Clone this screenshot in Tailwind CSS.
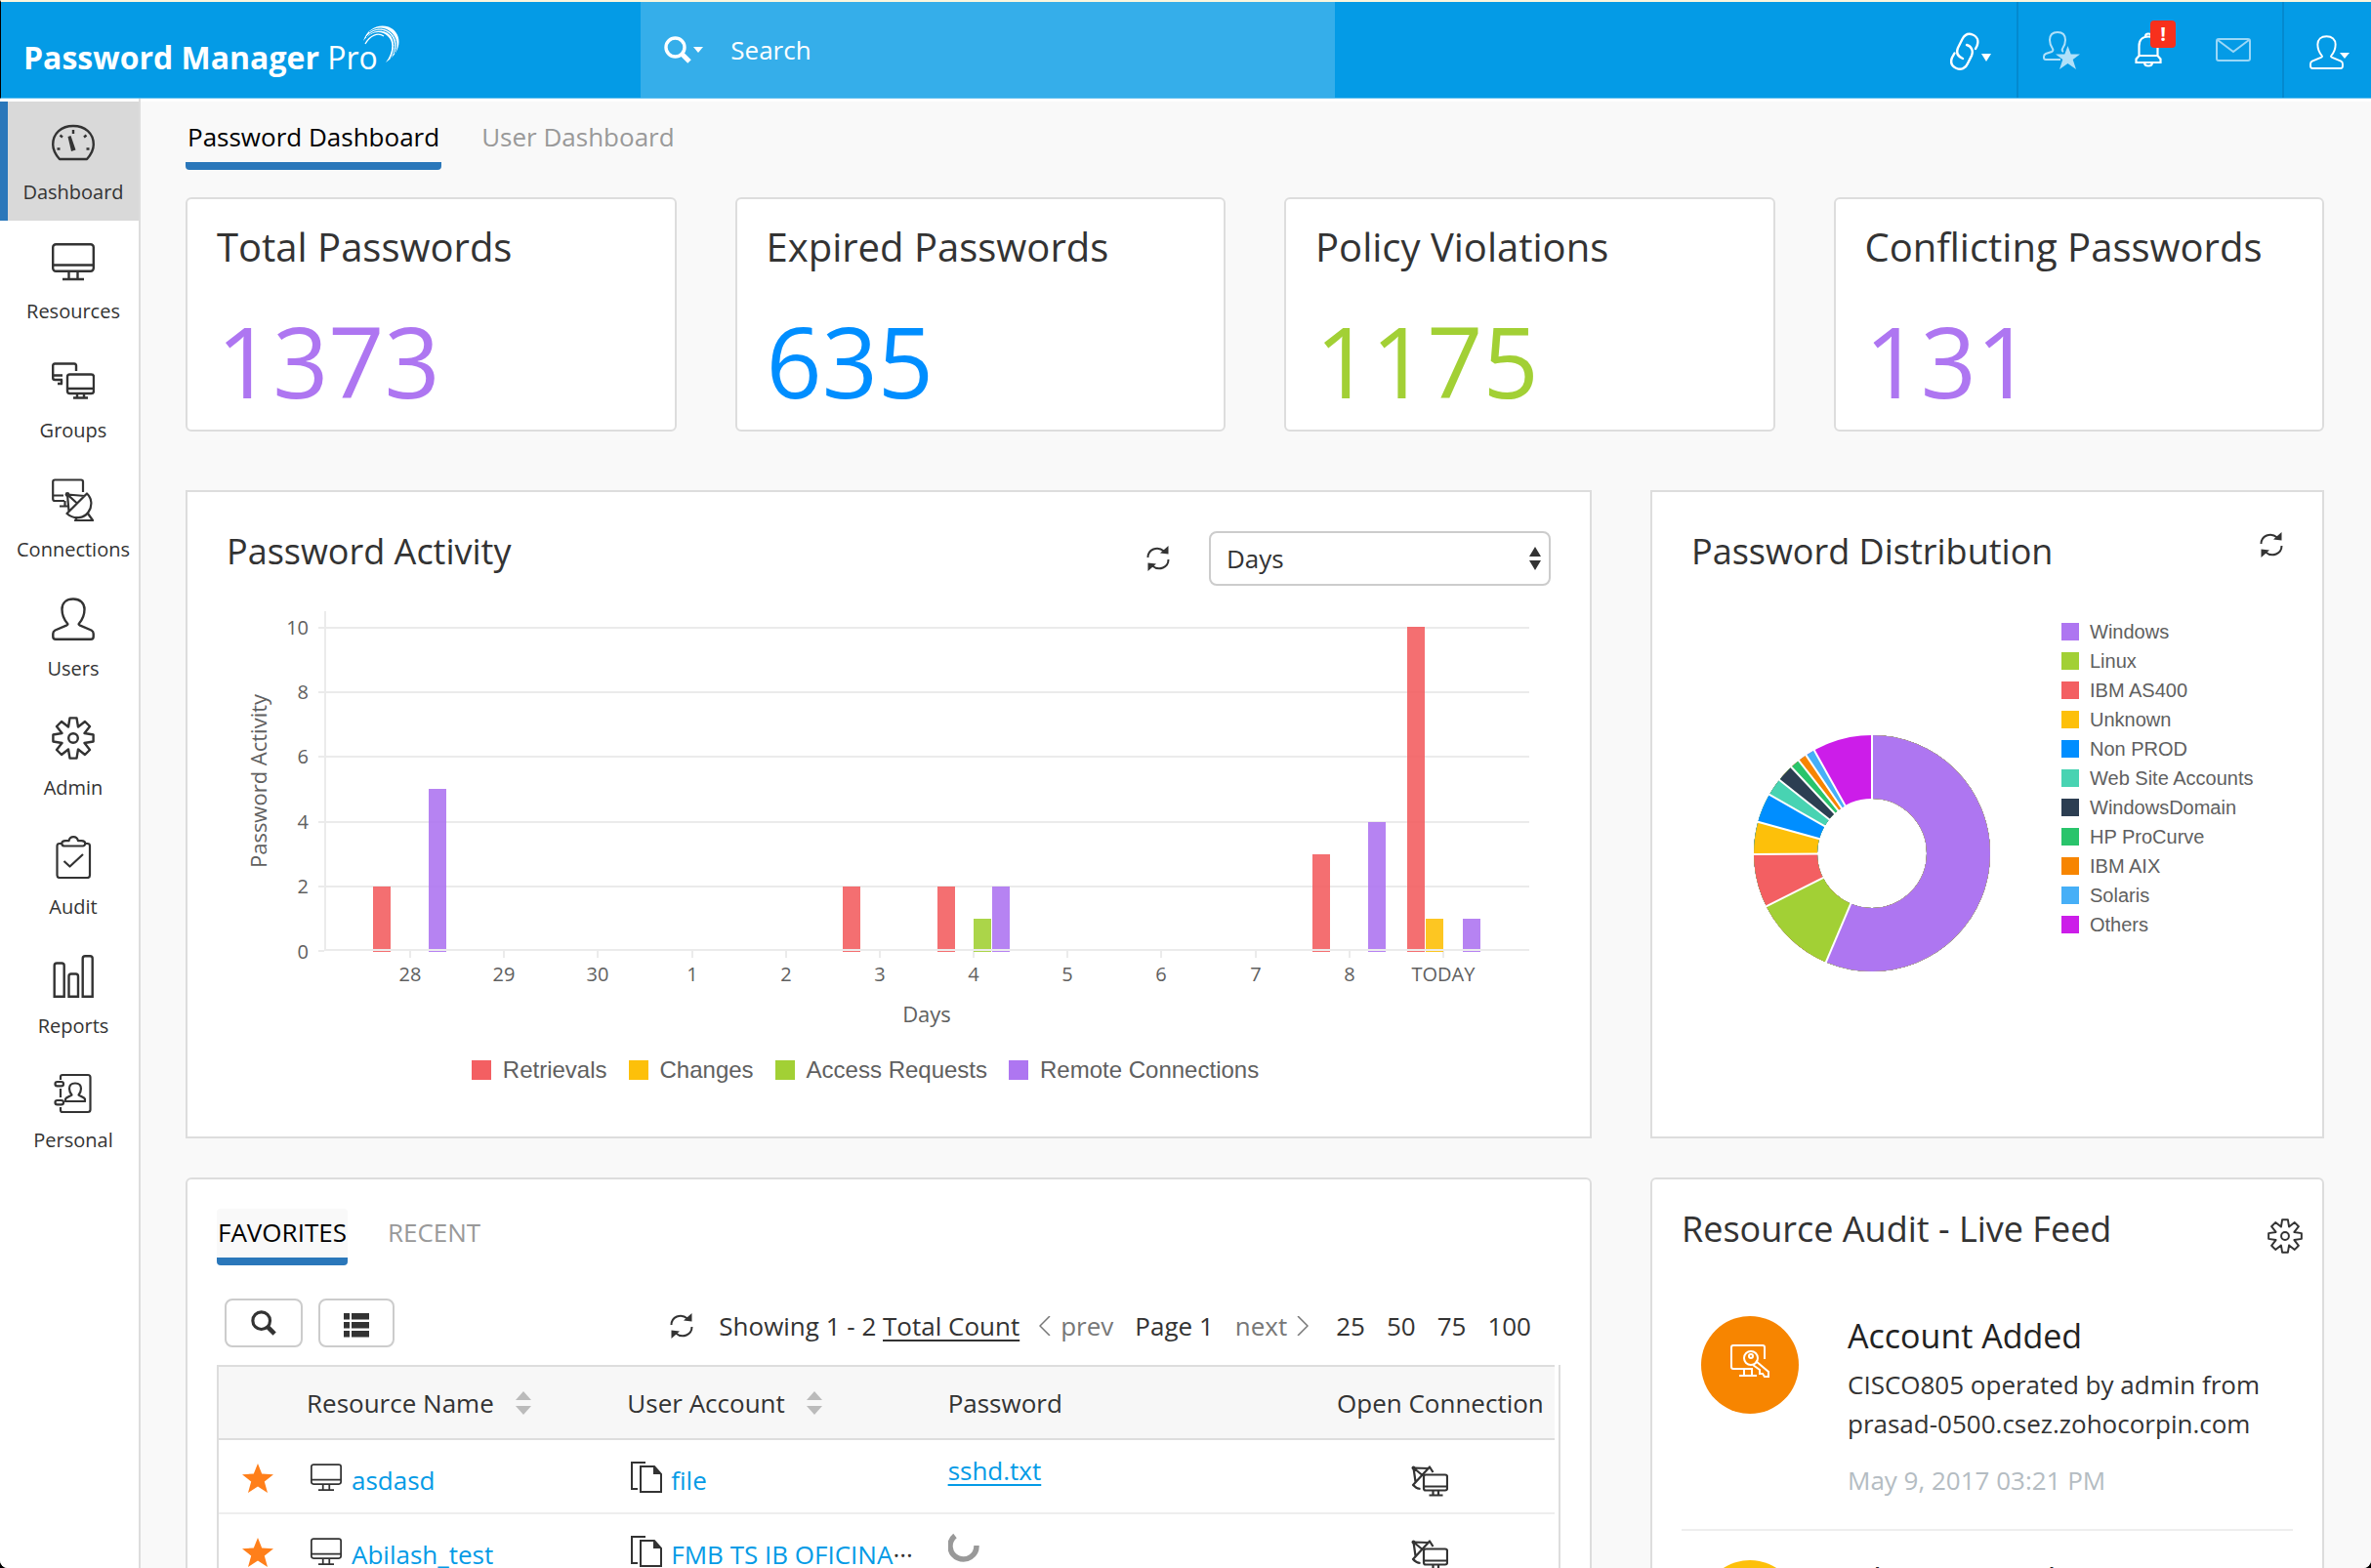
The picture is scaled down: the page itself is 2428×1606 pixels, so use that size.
<!DOCTYPE html>
<html lang="en" class="bg-black">
<head>
  <title>Password Manager Pro</title>
  <meta charset="utf-8">
  <meta name="viewport" content="width=device-width, initial-scale=1">
  <script src="https://cdn.jsdelivr.net/npm/@tailwindcss/browser@4"></script>
</head>
<body class="flex h-screen flex-col overflow-hidden rounded-b-lg bg-white font-['Open_Sans',sans-serif] text-[26px] leading-10 text-[#333]">

  <!-- icon sprite -->
  <svg class="hidden">
    <symbol id="i-gauge" viewBox="0 0 44 44">
      <path d="M8 39h28c4-4.500 6.800-9 6.800-15C42.800 12.500 34 5 22 5S1.200 12.500 1.200 24c0 6 2.800 10.500 6.800 15z" fill="none" stroke="currentColor" stroke-width="2.400" stroke-linejoin="round"/>
      <path d="M22 9v4M8.500 14.500l2.500 2M35.500 14.500l-2.500 2M5.500 28.500h3M35.500 28.500h3" stroke="currentColor" stroke-width="2.400"/>
      <path d="M16.500 16l3-1 5 14.500-4.500 1.500z" fill="currentColor"/>
    </symbol>
    <symbol id="i-monitor" viewBox="0 0 44 44">
      <g fill="none" stroke="currentColor" stroke-width="2.400">
        <rect x="1.200" y="4.200" width="41.600" height="27.500" rx="3"/>
        <path d="M1.200 25.500h41.600M17.500 32v7M26.500 32v7M11 40h22"/>
      </g>
    </symbol>
    <symbol id="i-monitors" viewBox="0 0 44 44">
      <g fill="none" stroke="currentColor" stroke-width="2.400">
        <path d="M25 12V6.500q0-2-2-2H3.200q-2 0-2 2V19q0 2 2 2H11M1.200 16.500H11M10 21v4M6 25h5"/>
        <rect x="16" y="15.500" width="27" height="19.500" rx="2.500"/>
        <path d="M16 30h27M26 35v4M33 35v4M22 39.500h15"/>
      </g>
    </symbol>
    <symbol id="i-dish" viewBox="0 0 44 44">
      <g fill="none" stroke="currentColor" stroke-width="2.200" stroke-linejoin="round">
        <path d="M32 14V3.500q0-2-2-2H3.200q-2 0-2 2V21q0 2 2 2H13M1.200 17.500H12M13.500 23v5M8 28.500h8"/>
        <path d="M36 15.500L15.500 36C23 42.500 33 41 37.500 34.500S41 20 36 15.500zM16 16.500l1.500 17M16 16.500l18 1.500M16 16.500l10 9"/>
        <path d="M26 40l-2 3h18l-5-7"/>
      </g>
      <circle cx="16" cy="16.500" r="2.400" fill="currentColor"/>
    </symbol>
    <symbol id="i-user" viewBox="0 0 44 44">
      <path d="M22 1.500c-7 0-11.500 4-11.500 10.500 0 6.500 2 10.500 5.500 14.500q1 1-.5 1.800L3.500 33.500Q1.300 34.700 1.300 37v3q0 2.700 2.700 2.700h36q2.700 0 2.700-2.700v-3q0-2.300-2.200-3.500l-12-5.200q-1.500-.8-.5-1.800c3.500-4 5.500-8 5.500-14.500C33.500 5.500 29 1.500 22 1.500z" fill="none" stroke="currentColor" stroke-width="2.400" stroke-linejoin="round"/>
    </symbol>
    <symbol id="i-gear" viewBox="-22 -22 44 44">
      <g fill="none" stroke="currentColor" stroke-width="2.400" stroke-linejoin="round">
        <path d="M-3.500-20.600h7L5-11.500l7-5.500 5 5L11.500-5l9.100 1.500v7L11.500 5l5.500 7-5 5-7-5.500-1.500 9.100h-7L-5 11.500l-7 5.500-5-5L-11.500 5l-9.100-1.500v-7L-11.500-5-17-12l5-5 7 5.500z"/>
        <circle r="4.800"/>
      </g>
    </symbol>
    <symbol id="i-clip" viewBox="0 0 44 44">
      <g fill="none" stroke="currentColor" stroke-width="2.200" stroke-linejoin="round">
        <path d="M10.500 8H8q-2.500 0-2.500 2.500v30Q5.500 43 8 43h28.500q2.500 0 2.500-2.500v-30Q39 8 36.500 8H34"/>
        <path d="M12.500 10.500h19.500q2.500-.5 2.200-3-.2-2-3.700-2.300H27Q26 1.200 22.200 1.200T17.500 5.200H14q-3.500.3-3.700 2.300-.2 2.500 2.200 3z"/>
        <path d="M12.500 26l6 5.500L32 19"/>
      </g>
    </symbol>
    <symbol id="i-bars" viewBox="0 0 44 44">
      <path d="M2.700 42.700V11q0-2.500 2.500-2.500h5q2.500 0 2.500 2.500v31.700zM17.500 42.700V22q0-2.500 2.500-2.500h4.500q2.500 0 2.500 2.500v20.700zM31.700 42.700V3.800q0-2.500 2.500-2.500h5q2.500 0 2.500 2.500v38.900z" fill="none" stroke="currentColor" stroke-width="2.400"/>
    </symbol>
    <symbol id="i-book" viewBox="0 0 44 44">
      <g fill="none" stroke="currentColor" stroke-width="2.200">
        <path d="M9 8V5q0-2 2-2h26q2.500 0 2.500 2.500v33q0 2.500-2.500 2.500H11q-2 0-2-2v-3M9 17v9"/>
        <rect x="3.500" y="10" width="8.500" height="4.400" rx="2.200"/>
        <rect x="3.500" y="29" width="8.500" height="4.400" rx="2.200"/>
        <path d="M24 11.500c-4 0-6 2.200-6 5.500 0 3 1 4.500 2.500 6.500l-5.500 3q-1.500 1-1 3.500h20q.5-2.500-1-3.500l-5.500-3c1.500-2 2.500-3.500 2.500-6.500 0-3.300-2-5.500-6-5.500z" stroke-linejoin="round"/>
      </g>
    </symbol>
    <symbol id="i-refresh" viewBox="0 0 24 28">
      <g id="half">
        <path d="M1.500 13C1.500 5 11 .5 18 6.500" fill="none" stroke="currentColor" stroke-width="2"/>
        <path d="M22.500 1v8.500L14 8.500z" fill="currentColor"/>
      </g>
      <use href="#half" transform="rotate(180 12 14)"/>
    </symbol>
    <symbol id="i-zoom" viewBox="0 0 28 28">
      <circle cx="11.500" cy="11.500" r="9.500" fill="none" stroke="currentColor" stroke-width="3.400"/>
      <path d="M18.500 18.500l7.500 7.500" stroke="currentColor" stroke-width="5"/>
    </symbol>
    <symbol id="i-star" viewBox="0 0 32 30">
      <path d="M16 0l4.200 10.500 11.800.7-9.200 7.300L26 30l-10-6.500L6 30l3.200-11.500L0 11.200l11.800-.7z" fill="currentColor"/>
    </symbol>
    <symbol id="i-docs" viewBox="0 0 34 34">
      <g fill="none" stroke="currentColor" stroke-width="2">
        <path d="M16 2H2v27h6M11 6h14l7 8v18H11z"/>
      </g>
      <path d="M24 5.500V14h8z" fill="currentColor"/>
    </symbol>
    <symbol id="i-remote" viewBox="0 0 38 32">
      <g fill="none" stroke="currentColor" stroke-width="2.200" stroke-linejoin="round">
        <rect x="13" y="9.500" width="24" height="16" rx="2"/>
        <path d="M13 21.500h24M22.500 26v4M28 26v4M18.500 30.500h14M22.500 7L19 1.500 2 20q3 3.500 7.500 4M2.500 2.500l2 14M2.500 2.500L18 3M2.500 2.500l8.500 7"/>
      </g>
      <circle cx="2.500" cy="2.500" r="2" fill="currentColor"/>
    </symbol>
    <symbol id="i-sort" viewBox="0 0 16 24">
      <path d="M8 0l8 9H0zM8 24l8-9H0z" fill="currentColor"/>
    </symbol>
  </svg>

  <header class="flex h-[101px] shrink-0 border-t-2 border-b border-l border-t-[#fbf6de] border-b-[#5bbdee] border-l-black bg-[#049be6] text-white">
    <div class="flex w-[27%] items-center pl-[23px]">
      <a href="#" class="flex items-center text-[32px] font-bold">
        <span class="pt-4">Password Manager <span class="font-normal">Pro</span></span>
        <svg class="-ml-4 mb-3 h-10 w-10" viewBox="0 0 40 40" fill="none" stroke="white">
          <path d="M1 17C5 4 17-1 27 2.500c14 5.500 15 25-3 36.500 7-9 9-21 2-27C20 6 9 6 1 17z" fill="white" stroke="none"/>
          <path d="M4 13C11 5 21 4 28 10c6 6 6 16 1 25M7 8C15 2 24 3 30 9c6 6 6 14 3 21" stroke="#049be6" stroke-width="1"/>
          <path d="M3 20C8 11 16 8 22 12" stroke-width="1.200"/>
        </svg>
      </a>
    </div>
    <form class="flex w-[29.300%] items-center bg-[#35aeea] pl-6">
      <button type="button" aria-label="Search in" class="flex items-center gap-0.5">
        <svg class="h-7 w-7"><use href="#i-zoom"/></svg>
        <svg class="h-1.5 w-2.5" viewBox="0 0 10 6"><path d="M0 0h10L5 6z" fill="white"/></svg>
      </button>
      <input type="search" aria-label="Search" placeholder="Search" class="ml-7 min-w-0 flex-1 bg-transparent outline-none placeholder:text-white">
    </form>
    <div class="ml-auto flex">
      <button type="button" aria-label="Links" class="flex items-center border-r-2 border-[#0489cf] pr-[26px]">
        <svg class="mt-1 h-10 w-8" viewBox="0 0 32 40" fill="none" stroke="white" stroke-width="2.400" stroke-linecap="round">
          <path d="M8 16l4.500-9C15 2.500 19 1 23 2.500c5 2 6.500 6.500 4.500 11.500l-1.500 3M17 13c5 1.500 7 6 5 11l-4 8c-2 5-7 7-11.500 5S0 31 2 26l2.500-4.500M8 16c-2 5 0 9 5 11"/>
        </svg>
        <svg class="mt-4 h-2 w-2.5" viewBox="0 0 10 8"><path d="M0 0h10L5 8z" fill="white"/></svg>
      </button>
      <div class="flex items-center gap-[55px] border-r-2 border-[#0489cf] pr-8 pl-6">
        <button type="button" aria-label="Access requests">
          <svg class="h-10 w-10 text-[#b0e0f9]" viewBox="0 0 40 40">
            <path d="M19 30H4q-2 0-2-2v-1q0-2 2-3l6-2q2-1 1-3Q8 15 8 10q0-8 8-8t8 8q0 5-3 9-1 2 1 3" fill="none" stroke="currentColor" stroke-width="2"/>
            <path d="M26.500 16l3.200 8.500H39l-7.300 5.500L35 40l-8.500-6L18 40l3.300-10-7.300-5.500h9.300z" fill="currentColor"/>
          </svg>
        </button>
        <button type="button" aria-label="Notifications" class="relative">
          <svg class="h-9 w-7" viewBox="0 0 28 36" fill="none" stroke="white" stroke-width="2.200">
            <path d="M4.500 24V14C4.500 8 8 4.500 14 4.500S23.500 8 23.500 14v10M4.500 24h19l3 3.500V31h-25v-3.500zM11 4.500Q11 1.500 14 1.500t3 3M10 31q0 3.500 4 3.500t4-3.500"/>
          </svg>
          <span class="absolute -top-3 left-4 h-7 w-6.5 rounded bg-[#f8301c] text-center text-xl leading-7 font-bold">!</span>
        </button>
        <button type="button" aria-label="Messages">
          <svg class="h-6 w-9 text-[#9ad7f7]" viewBox="0 0 36 24" fill="none" stroke="currentColor" stroke-width="2"><rect x="1" y="1" width="34" height="22" rx="2"/><path d="M2 2l16 12L34 2"/></svg>
        </button>
      </div>
      <button type="button" aria-label="Account" class="flex items-center pr-[22px] pl-[26px]">
        <svg class="mt-1 h-[35px] w-[35px]"><use href="#i-user"/></svg>
        <svg class="mt-3 -ml-1 h-1.5 w-2.5" viewBox="0 0 10 6"><path d="M0 0h10L5 6z" fill="white"/></svg>
      </button>
    </div>
  </header>

  <div class="flex min-h-0 flex-1">
    <nav class="w-36 shrink-0 border-r-2 border-[#ddd] bg-white pt-[3px] text-center text-xl leading-7">
      <a href="#" class="flex h-[122px] flex-col items-center gap-[15px] border-l-8 border-[#2a77ba] bg-[#d9d9d9] pt-5"><svg class="h-11 w-11"><use href="#i-gauge"/></svg>Dashboard</a>
      <a href="#" class="flex h-[122px] flex-col items-center gap-[15px] pt-5 pl-2"><svg class="h-11 w-11"><use href="#i-monitor"/></svg>Resources</a>
      <a href="#" class="flex h-[122px] flex-col items-center gap-[15px] pt-5 pl-2"><svg class="h-11 w-11"><use href="#i-monitors"/></svg>Groups</a>
      <a href="#" class="flex h-[122px] flex-col items-center gap-[15px] pt-5 pl-2"><svg class="h-11 w-11"><use href="#i-dish"/></svg>Connections</a>
      <a href="#" class="flex h-[122px] flex-col items-center gap-[15px] pt-5 pl-2"><svg class="h-11 w-11"><use href="#i-user"/></svg>Users</a>
      <a href="#" class="flex h-[122px] flex-col items-center gap-[15px] pt-5 pl-2"><svg class="h-11 w-11"><use href="#i-gear"/></svg>Admin</a>
      <a href="#" class="flex h-[122px] flex-col items-center gap-[15px] pt-5 pl-2"><svg class="h-11 w-11"><use href="#i-clip"/></svg>Audit</a>
      <a href="#" class="flex h-[120px] flex-col items-center gap-[15px] pt-5 pl-2"><svg class="h-11 w-11"><use href="#i-bars"/></svg>Reports</a>
      <a href="#" class="flex h-[120px] flex-col items-center gap-3 pt-5 pl-2"><svg class="h-11 w-11"><use href="#i-book"/></svg>Personal</a>
    </nav>

    <main class="mt-[3px] min-w-0 flex-1 overflow-hidden bg-[#f9f9f9] pt-4 pr-12 pl-[46px]">
      <div class="flex gap-10">
        <button type="button" class="rounded-sm border-b-8 border-[#2a77ba] px-0.5 pb-1.5 text-black">Password Dashboard</button>
        <button type="button" class="border-b-8 border-transparent px-px pb-1.5 text-[#999]">User Dashboard</button>
      </div>

      <!-- totals -->
      <section class="mt-7 grid grid-cols-4 gap-15">
        <div class="h-60 rounded-md border-2 border-[#ddd] bg-white px-[30px] pt-[25px]">
          <h2 class="text-[40px] leading-12">Total Passwords</h2>
          <p class="mt-8 text-[100px] leading-[120px] text-[#ae76f1]">1373</p>
        </div>
        <div class="h-60 rounded-md border-2 border-[#ddd] bg-white px-[30px] pt-[25px]">
          <h2 class="text-[40px] leading-12">Expired Passwords</h2>
          <p class="mt-8 text-[100px] leading-[120px] text-[#008eff]">635</p>
        </div>
        <div class="h-60 rounded-md border-2 border-[#ddd] bg-white px-[30px] pt-[25px]">
          <h2 class="text-[40px] leading-12">Policy Violations</h2>
          <p class="mt-8 text-[100px] leading-[120px] text-[#a2d035]">1175</p>
        </div>
        <div class="h-60 rounded-md border-2 border-[#ddd] bg-white px-[30px] pt-[25px]">
          <h2 class="text-[40px] leading-12">Conflicting Passwords</h2>
          <p class="mt-8 text-[100px] leading-[120px] text-[#ae76f1]">131</p>
        </div>
      </section>

      <!-- charts -->
      <section class="mt-15 grid grid-cols-[48fr_23fr] gap-15">
        <div class="h-[664px] border-2 border-[#ddd] bg-white p-10">
          <div class="flex items-start">
            <h2 class="text-[36px] leading-[42px]">Password Activity</h2>
            <button type="button" aria-label="Refresh" class="mt-3.5 mr-10 ml-auto"><svg class="h-7 w-6"><use href="#i-refresh"/></svg></button>
            <div class="relative">
              <select aria-label="Period" class="h-14 w-[350px] appearance-none rounded-lg border-2 border-[#ccc] bg-white pl-4">
                <option>Days</option>
                <option>Weeks</option>
                <option>Months</option>
              </select>
              <svg class="pointer-events-none absolute top-4 right-2.5 h-6 w-3" viewBox="0 0 12 24"><path d="M6 0l6 10H0zM6 24l6-10H0z" fill="#333"/></svg>
            </div>
          </div>
          <svg class="block w-full" viewBox="0 0 1356 460">
            <g stroke="#ebebeb" stroke-width="2" shape-rendering="crispEdges">
              <path d="M94 43h1240M94 109h1240M94 175h1240M94 242h1240M94 308h1240M94 374h6M101 26v348"/>
              <path d="M188 374v7M284 374v7M380 374v7M477 374v7M573 374v7M669 374v7M765 374v7M861 374v7M957 374v7M1054 374v7M1150 374v7M1246 374v7"/>
            </g>
            <g fill="#f35f62" fill-opacity=".9">
              <rect x="150" y="308" width="18" height="67"/>
              <rect x="631" y="308" width="18" height="67"/>
              <rect x="728" y="308" width="18" height="67"/>
              <rect x="1112" y="275" width="18" height="100"/>
              <rect x="1209" y="42" width="18" height="333"/>
            </g>
            <g fill="#ae76f1" fill-opacity=".9">
              <rect x="207" y="208" width="18" height="167"/>
              <rect x="784" y="308" width="18" height="67"/>
              <rect x="1169" y="242" width="18" height="133"/>
              <rect x="1266" y="341" width="18" height="34"/>
            </g>
            <rect x="765" y="341" width="18" height="34" fill="#a2d035" fill-opacity=".9"/>
            <rect x="1228" y="341" width="18" height="34" fill="#fdc00a" fill-opacity=".9"/>
            <path d="M100 373h1234" stroke="#ebebeb" stroke-width="2" shape-rendering="crispEdges"/>
            <g fill="#606060" font-size="20" text-anchor="end">
              <text x="84" y="50">10</text>
              <text x="84" y="116">8</text>
              <text x="84" y="182">6</text>
              <text x="84" y="249">4</text>
              <text x="84" y="315">2</text>
              <text x="84" y="382">0</text>
            </g>
            <g fill="#606060" font-size="20" text-anchor="middle">
              <text x="188" y="405">28</text>
              <text x="284" y="405">29</text>
              <text x="380" y="405">30</text>
              <text x="477" y="405">1</text>
              <text x="573" y="405">2</text>
              <text x="669" y="405">3</text>
              <text x="765" y="405">4</text>
              <text x="861" y="405">5</text>
              <text x="957" y="405">6</text>
              <text x="1054" y="405">7</text>
              <text x="1150" y="405">8</text>
              <text x="1246" y="405">TODAY</text>
            </g>
            <g fill="#606060" font-size="22" text-anchor="middle">
              <text x="717" y="447">Days</text>
              <text transform="translate(41 200) rotate(-90)">Password Activity</text>
            </g>
          </svg>
          <ul class="mt-4 flex justify-center gap-[22px] pr-12 font-['Liberation_Sans',sans-serif] text-2xl leading-10 text-[#606060]">
            <li class="flex items-center gap-3"><span class="h-5 w-5 bg-[#f35f62]"></span>Retrievals</li>
            <li class="flex items-center gap-3"><span class="h-5 w-5 bg-[#fdc00a]"></span>Changes</li>
            <li class="flex items-center gap-3"><span class="h-5 w-5 bg-[#a2d035]"></span>Access Requests</li>
            <li class="flex items-center gap-3"><span class="h-5 w-5 bg-[#ae76f1]"></span>Remote Connections</li>
          </ul>
        </div>

        <div class="h-[664px] border-2 border-[#ddd] bg-white p-10">
          <div class="flex h-14 items-start justify-between">
            <h2 class="text-[36px] leading-[42px]">Password Distribution</h2>
            <button type="button" aria-label="Refresh"><svg class="h-7 w-6"><use href="#i-refresh"/></svg></button>
          </div>
          <div class="mt-8 flex items-start gap-[73px] pl-16">
            <svg class="mt-[121px] h-[242px] w-[242px] shrink-0" viewBox="-121 -121 242 242">
              <g fill="none" stroke-width="65" transform="rotate(-90)">
                <circle r="88.500" pathLength="360" stroke="#cc1de9"/>
                <circle r="88.500" pathLength="360" stroke="#46aff7" stroke-dasharray="330.700 360"/>
                <circle r="88.500" pathLength="360" stroke="#f78500" stroke-dasharray="326.100 360"/>
                <circle r="88.500" pathLength="360" stroke="#29c46b" stroke-dasharray="321.700 360"/>
                <circle r="88.500" pathLength="360" stroke="#2c3e52" stroke-dasharray="316.900 360"/>
                <circle r="88.500" pathLength="360" stroke="#48d3b2" stroke-dasharray="308.400 360"/>
                <circle r="88.500" pathLength="360" stroke="#008eff" stroke-dasharray="299.800 360"/>
                <circle r="88.500" pathLength="360" stroke="#fdc00a" stroke-dasharray="285.400 360"/>
                <circle r="88.500" pathLength="360" stroke="#f35f62" stroke-dasharray="269.500 360"/>
                <circle r="88.500" pathLength="360" stroke="#a2d035" stroke-dasharray="243.400 360"/>
                <circle r="88.500" pathLength="360" stroke="#ae76f1" stroke-dasharray="202.900 360"/>
              </g>
              <g stroke="white" stroke-width="2">
                <path d="M0-50v-74"/>
                <path d="M0-50v-74" transform="rotate(202.900)"/>
                <path d="M0-50v-74" transform="rotate(243.400)"/>
                <path d="M0-50v-74" transform="rotate(269.500)"/>
                <path d="M0-50v-74" transform="rotate(285.400)"/>
                <path d="M0-50v-74" transform="rotate(299.800)"/>
                <path d="M0-50v-74" transform="rotate(308.400)"/>
                <path d="M0-50v-74" transform="rotate(316.900)"/>
                <path d="M0-50v-74" transform="rotate(321.700)"/>
                <path d="M0-50v-74" transform="rotate(326.100)"/>
                <path d="M0-50v-74" transform="rotate(330.700)"/>
              </g>
            </svg>
            <ul class="font-['Liberation_Sans',sans-serif] text-xl leading-[30px] whitespace-nowrap text-[#606060]">
              <li class="flex items-center gap-[11px]"><span class="h-4.5 w-4.5 bg-[#ae76f1]"></span>Windows</li>
              <li class="flex items-center gap-[11px]"><span class="h-4.5 w-4.5 bg-[#a2d035]"></span>Linux</li>
              <li class="flex items-center gap-[11px]"><span class="h-4.5 w-4.5 bg-[#f35f62]"></span>IBM AS400</li>
              <li class="flex items-center gap-[11px]"><span class="h-4.5 w-4.5 bg-[#fdc00a]"></span>Unknown</li>
              <li class="flex items-center gap-[11px]"><span class="h-4.5 w-4.5 bg-[#008eff]"></span>Non PROD</li>
              <li class="flex items-center gap-[11px]"><span class="h-4.5 w-4.5 bg-[#48d3b2]"></span>Web Site Accounts</li>
              <li class="flex items-center gap-[11px]"><span class="h-4.5 w-4.5 bg-[#2c3e52]"></span>WindowsDomain</li>
              <li class="flex items-center gap-[11px]"><span class="h-4.5 w-4.5 bg-[#29c46b]"></span>HP ProCurve</li>
              <li class="flex items-center gap-[11px]"><span class="h-4.5 w-4.5 bg-[#f78500]"></span>IBM AIX</li>
              <li class="flex items-center gap-[11px]"><span class="h-4.5 w-4.5 bg-[#46aff7]"></span>Solaris</li>
              <li class="flex items-center gap-[11px]"><span class="h-4.5 w-4.5 bg-[#cc1de9]"></span>Others</li>
            </ul>
          </div>
        </div>
      </section>

      <section class="mt-10 grid grid-cols-[48fr_23fr] gap-15">
        <!-- favorites -->
        <div class="rounded-md border-2 border-[#ddd] bg-white p-[30px]">
          <div class="flex gap-10">
            <button type="button" class="rounded-sm border-b-8 border-[#2a77ba] bg-[#f9f9f9] px-px pb-0.5 leading-12 text-black">FAVORITES</button>
            <button type="button" class="border-b-8 border-transparent px-px pb-0.5 leading-12 text-[#999]">RECENT</button>
          </div>
          <div class="mt-[34px] flex items-end pr-[30px] pl-2 leading-11">
            <button type="button" aria-label="Search" class="flex h-[50px] w-20 items-center justify-center rounded-lg border-2 border-[#ccc]"><svg class="h-6.5 w-6.5"><use href="#i-zoom"/></svg></button>
            <button type="button" aria-label="Columns" class="ml-4 flex h-[50px] w-[78px] items-center justify-center rounded-lg border-2 border-[#ccc]">
              <svg class="mt-1 h-6.5 w-6.5" viewBox="0 0 26 26" fill="#333"><path d="M0 1h6v6.500H0zM8 1h18v6.500H8zM0 10h6v6.500H0zM8 10h18v6.500H8zM0 19h6v6.500H0zM8 19h18v6.500H8z"/></svg>
            </button>
            <button type="button" aria-label="Refresh" class="mr-6.5 mb-2 ml-auto"><svg class="h-7 w-6"><use href="#i-refresh"/></svg></button>
            <span>Showing 1 - 2 <a href="#" class="underline underline-offset-4">Total Count</a></span>
            <button type="button" class="ml-5 flex items-center gap-2.5 text-[#777]"><svg class="h-5 w-3" viewBox="0 0 12 20"><path d="M11 0L1 10l10 10" fill="none" stroke="currentColor" stroke-width="1.500"/></svg>prev</button>
            <span class="ml-5.5">Page 1</span>
            <button type="button" class="ml-5.5 flex items-center gap-2.5 text-[#777]">next<svg class="h-5 w-3" viewBox="0 0 12 20"><path d="M1 0l10 10L1 20" fill="none" stroke="currentColor" stroke-width="1.500"/></svg></button>
            <a href="#" class="ml-7">25</a>
            <a href="#" class="ml-5.5">50</a>
            <a href="#" class="ml-5.5">75</a>
            <a href="#" class="ml-5.5">100</a>
          </div>
          <div class="mt-[18px] border-x-2 border-[#ddd] pr-1">
            <table class="w-full table-fixed text-left">
              <thead>
                <tr class="h-[75px] border-y-2 border-[#ddd] bg-[#f7f7f7]">
                  <th aria-label="Favorite" class="w-[90px]"></th>
                  <th class="w-[24%] font-normal"><span class="flex items-center gap-[22px]">Resource Name<svg class="h-6 w-4 text-[#bbb]"><use href="#i-sort"/></svg></span></th>
                  <th class="w-[24%] font-normal"><span class="flex items-center gap-[22px]">User Account<svg class="h-6 w-4 text-[#bbb]"><use href="#i-sort"/></svg></span></th>
                  <th class="font-normal">Password</th>
                  <th class="w-[223px] font-normal whitespace-nowrap">Open Connection</th>
                </tr>
              </thead>
              <tbody>
                <tr class="h-[76px] border-b-2 border-[#eee]">
                  <td class="pt-1 pl-6"><svg class="h-[30px] w-8 text-[#ff7f1a]"><use href="#i-star"/></svg></td>
                  <td><a href="#" class="flex items-center gap-2.5 pt-2 pl-1 text-[#049be6]"><svg class="mb-1.5 h-8 w-8 text-[#333]"><use href="#i-monitor"/></svg>asdasd</a></td>
                  <td><a href="#" class="flex items-center gap-2 pt-2 pl-[3px] text-[#049be6]"><svg class="mb-1.5 h-[34px] w-[34px] text-[#333]"><use href="#i-docs"/></svg>file</a></td>
                  <td><a href="#" class="block pb-3 text-[#049be6] underline underline-offset-4">sshd.txt</a></td>
                  <td><button type="button" aria-label="Connect" class="block pt-2.5 pl-[76px]"><svg class="h-8 w-[38px]"><use href="#i-remote"/></svg></button></td>
                </tr>
                <tr class="h-[76px] border-b-2 border-[#eee]">
                  <td class="pt-1 pl-6"><svg class="h-[30px] w-8 text-[#ff7f1a]"><use href="#i-star"/></svg></td>
                  <td><a href="#" class="flex items-center gap-2.5 pt-2 pl-1 text-[#049be6]"><svg class="mb-1.5 h-8 w-8 text-[#333]"><use href="#i-monitor"/></svg>Abilash_test</a></td>
                  <td><a href="#" class="flex items-center gap-2 pt-2 pl-[3px] text-[#049be6]"><svg class="mb-1.5 h-[34px] w-[34px] text-[#333]"><use href="#i-docs"/></svg><span class="whitespace-nowrap">FMB TS IB OFICINA<span class="text-[#333]">···</span></span></a></td>
                  <td><svg class="mb-2 h-8 w-8" viewBox="0 0 32 32"><path d="M7 5a13.500 13.500 0 1 0 22 10" fill="none" stroke="#999" stroke-width="5.500"/></svg></td>
                  <td><button type="button" aria-label="Connect" class="block pt-2.5 pl-[76px]"><svg class="h-8 w-[38px]"><use href="#i-remote"/></svg></button></td>
                </tr>
              </tbody>
            </table>
          </div>
        </div>

        <!-- live feed -->
        <div class="rounded-md border-2 border-[#ddd] bg-white p-[30px]">
          <div class="mb-10 flex h-10 items-start justify-between">
            <h2 class="text-[36px] leading-[42px]">Resource Audit - Live Feed</h2>
            <button type="button" aria-label="Settings" class="mt-2.5 -mr-2.5"><svg class="block h-9 w-9"><use href="#i-gear"/></svg></button>
          </div>
          <article class="flex gap-[50px] border-b-2 border-[#eee] py-[30px] pl-5">
            <div class="flex h-25 w-25 shrink-0 items-center justify-center rounded-full bg-[#f78500]">
              <svg class="mb-2 h-[34px] w-10" viewBox="0 0 40 34" fill="none" stroke="white" stroke-width="2">
                <path d="M35 15V3q0-2-2-2H3Q1 1 1 3v20q0 2 2 2h20M14 25v6M22 26v5M9 32h18"/>
                <circle cx="21" cy="14" r="7"/>
                <circle cx="21" cy="12" r="2"/>
                <path d="M26 17l13 11v5h-4l-2-3h-3v-4L23 21"/>
              </svg>
            </div>
            <div>
              <h3 class="text-[34px] text-[#222]">Account Added</h3>
              <p class="mt-2.5">CISCO805 operated by admin from prasad-0500.csez.zohocorpin.com</p>
              <p class="mt-4.5 text-[#b4bcc2]">May 9, 2017 03:21 PM</p>
            </div>
          </article>
          <article class="flex gap-[50px] pt-[30px] pl-5">
            <div class="h-25 w-25 shrink-0 rounded-full bg-[#fdc00a]"></div>
            <h3 class="text-[34px] text-[#222]">File Retrieved</h3>
          </article>
        </div>
      </section>
    </main>
  </div>
</body>
</html>
